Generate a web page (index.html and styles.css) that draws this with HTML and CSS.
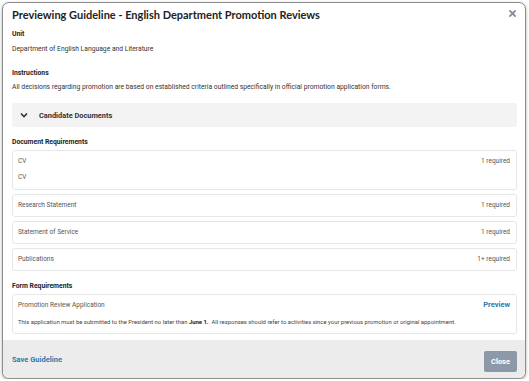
FILE: index.html
```html
<!DOCTYPE html>
<html>
<head>
	<title>Previewing Guideline</title>
	<link rel="stylesheet" href="styles.css">
</head>
<body>
	<div class="modal">
		<div class="modal-body">
			<div class="modal-head">
				<h2 class="modal-title">Previewing Guideline - English Department Promotion Reviews</h2>
				<span class="close-x">
					<svg width="7" height="7" viewBox="0 0 7 7"><path d="M1 1 L6 6 M6 1 L1 6" stroke="#858e9b" stroke-width="1.8" stroke-linecap="square"/></svg>
				</span>
			</div>

			<div class="label first">Unit</div>
			<div class="text unit">Department of English Language and Literature</div>

			<div class="label instr">Instructions</div>
			<div class="text desc">All decisions regarding promotion are based on established criteria outlined specifically in official promotion application forms.</div>

			<div class="toggle-bar">
				<svg class="chevron" width="8" height="6" viewBox="0 0 8 6"><path d="M1 1.5 L4 4.5 L7 1.5" fill="none" stroke="#333" stroke-width="1.6"/></svg>
				<span>Candidate Documents</span>
			</div>

			<div class="label section">Document Requirements</div>
			<div class="card-list">
				<div class="card">
					<div class="card-row"><span>CV</span><span class="req">1 required</span></div>
					<div class="card-sub">CV</div>
				</div>
				<div class="card">
					<div class="card-row"><span>Research Statement</span><span class="req">1 required</span></div>
				</div>
				<div class="card">
					<div class="card-row"><span>Statement of Service</span><span class="req">1 required</span></div>
				</div>
				<div class="card">
					<div class="card-row"><span>Publications</span><span class="req">1+ required</span></div>
				</div>
			</div>

			<div class="label section">Form Requirements</div>
			<div class="card form-card">
				<div class="card-row"><span>Promotion Review Application</span><a class="preview">Preview</a></div>
				<div class="card-note">This application must be submitted to the President no later than <b>June 1.</b>&nbsp; All responses should refer to activities since your previous promotion or original appointment.</div>
			</div>
		</div>

		<div class="modal-foot">
			<a class="save">Save Guideline</a>
			<button class="close-btn">Close</button>
		</div>
	</div>
</body>
</html>
```

FILE: styles.css
```css
body {
	margin: 0;
	background-color: #fff;
	font-family: Roboto, "Liberation Sans", sans-serif;
	color: #333;
}

/* the dialog */
.modal {
	margin: 2px 0 0 2px;
	width: 524px;
	height: 377px;
	box-sizing: border-box;
	border: 1px solid #8c8c8c;
	border-radius: 7px;
	box-shadow: 0 1px 3px rgba(0,0,0,0.35);
	background: #fff;
	overflow: hidden;
	display: flex;
	flex-direction: column;
}

.modal-body {
	padding: 5px 8px 0 9px;
	flex: 1;
}

.modal-head {
	display: flex;
	justify-content: space-between;
	align-items: center;
}

.modal-title {
	margin: 0;
	font-family: Lato, "Open Sans", sans-serif;
	font-size: 11px;
	line-height: 14px;
	font-weight: 700;
	color: #222;
}

.close-x {
	display: flex;
	margin-right: 1px;
	margin-top: -3px;
}

/* labels and text */
.label {
	font-size: 6.8px;
	line-height: 10px;
	font-weight: 700;
	color: #222;
}
.label.first { margin-top: 7px; }
.label.instr { margin-top: 14px; }
.label.section { margin-top: 10px; }

.text {
	font-size: 6.75px;
	line-height: 10px;
	color: #333;
}
.text.unit { margin-top: 5px; }
.text.desc { margin-top: 4px; }

/* collapsible bar */
.toggle-bar {
	margin-top: 11px;
	height: 24px;
	background: #f3f3f3;
	border-radius: 2px;
	display: flex;
	align-items: center;
	font-size: 7.4px;
	font-weight: 700;
	color: #333;
}
.chevron {
	margin-left: 8px;
	margin-right: 11px;
}

/* requirement cards */
.card-list {
	margin-top: 3px;
	display: flex;
	flex-direction: column;
	gap: 4px;
}

.card {
	border: 1px solid #e6e6e6;
	border-radius: 3px;
	padding: 5px 6px 6px 5px;
	font-size: 6.5px;
	line-height: 10px;
	color: #555;
}

.card-row {
	display: flex;
	justify-content: space-between;
}

.card-sub {
	margin-top: 6px;
	padding-bottom: 1px;
}

.form-card {
	margin-top: 3px;
}

.card-note {
	margin-top: 7px;
	font-size: 5.9px;
	color: #444;
}
.card-note b {
	color: #222;
}

.preview {
	font-size: 7.5px;
	font-weight: 700;
	color: #2b7bb0;
}

/* footer */
.modal-foot {
	height: 38px;
	background: #ececec;
	display: flex;
	align-items: center;
	justify-content: space-between;
	padding: 0 8px 0 9px;
}

.save {
	font-size: 7.5px;
	font-weight: 700;
	color: #2b7bb0;
}

.close-btn {
	width: 33px;
	height: 21px;
	margin-top: 5px;
	border: none;
	border-radius: 2px;
	background: #8d99a8;
	color: #fff;
	font-family: Roboto, "Liberation Sans", sans-serif;
	font-size: 7.5px;
	font-weight: 700;
	padding: 0;
}
```
